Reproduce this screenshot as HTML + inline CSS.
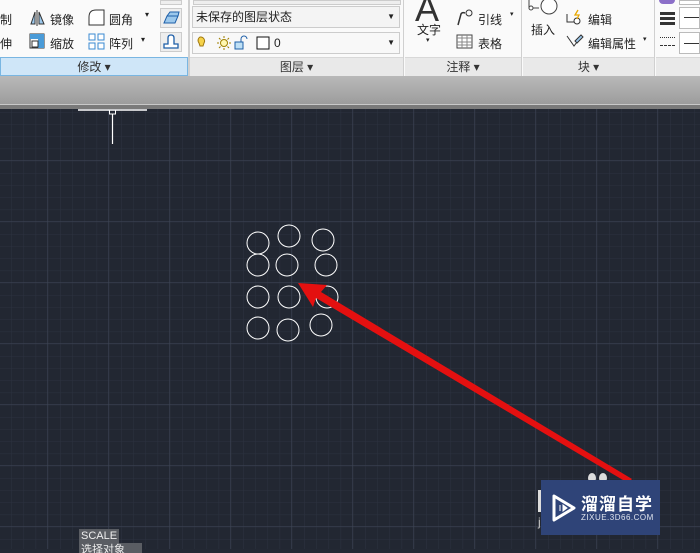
<!DOCTYPE html>
<html><head><meta charset="utf-8"><style>
*{margin:0;padding:0;box-sizing:border-box}
body{width:700px;height:549px;overflow:hidden;position:relative;background:#232833;font-family:"Liberation Sans","Noto Sans CJK SC",sans-serif;font-size:12px;color:#222}
.rib{position:absolute;left:0;top:0;width:700px;height:76px;background:#fafafa}
.lbl{position:absolute;top:57px;height:19px;background:#e9e9e9;border-top:1px solid #d8d8d8;text-align:center;font-size:12px;line-height:18px;color:#333}
.sep{position:absolute;top:0;width:2px;height:76px;background:#d0d0d0}
.t{position:absolute;font-size:12px;color:#222;white-space:nowrap}
.dd{position:absolute;height:22px;background:#f4f4f4;border:1px solid #ccc;font-size:12px;line-height:20px;padding-left:3px}
.band{position:absolute;left:0;top:76px;width:700px;height:28px;background:linear-gradient(#b9b9b9,#9c9c9c)}
.band2{position:absolute;left:0;top:104px;width:700px;height:5px;background:#7a7a7a;border-top:1px solid #c8c8c8}
</style></head><body>
<svg style="position:absolute;left:0;top:109px" width="700" height="440">
<defs>
<pattern id="mn" width="12.2" height="12.2" patternUnits="userSpaceOnUse" x="-1" y="3"><path d="M0 0V12.2M0 0H12.2" stroke="#2c3240" stroke-width="1"/></pattern>
<pattern id="mj" width="61" height="61" patternUnits="userSpaceOnUse" x="47" y="51"><path d="M0 0V61M0 0H61" stroke="#3f4656" stroke-width="1"/></pattern>
</defs>
<rect width="700" height="440" fill="#222732"/>
<rect width="700" height="440" fill="url(#mn)"/>
<rect width="700" height="440" fill="url(#mj)"/>
<line x1="78" y1="1" x2="147" y2="1" stroke="#fff" stroke-width="1.5"/>
<rect x="109.5" y="1" width="6" height="4" fill="none" stroke="#fff"/>
<line x1="112.5" y1="5" x2="112.5" y2="35" stroke="#fff" stroke-width="1.2"/>
<g fill="none" stroke="#fff" stroke-width="1">
<circle cx="258" cy="134" r="11"/><circle cx="289" cy="127" r="11"/><circle cx="323" cy="131" r="11"/>
<circle cx="258" cy="156" r="11"/><circle cx="287" cy="156" r="11"/><circle cx="326" cy="156" r="11"/>
<circle cx="258" cy="188" r="11"/><circle cx="289" cy="188" r="11"/><circle cx="327" cy="188" r="11"/>
<circle cx="258" cy="219" r="11"/><circle cx="288" cy="221" r="11"/><circle cx="321" cy="216" r="11"/>
</g>
<polygon points="298,174 327,176 321,183 632,370 628,374 316,189 313,198" fill="#e41010"/>
<ellipse cx="592" cy="369" rx="4" ry="5" fill="#ddd"/><ellipse cx="603" cy="369" rx="4" ry="5" fill="#ddd"/>
</svg>
<div style="position:absolute;left:541px;top:480px;width:119px;height:55px;background:#2f4478"></div>
<svg style="position:absolute;left:548px;top:492px" width="30" height="32"><path d="M6 4 L26 16 L6 28 Z" fill="none" stroke="#fff" stroke-width="3" stroke-linejoin="round"/><path d="M12 13v6M15 13l4 3-4 3z" stroke="#fff" fill="#fff" stroke-width="1"/></svg>
<div class="t" style="left:581px;top:490px;color:#fff;font-size:17px;font-weight:bold;letter-spacing:1px">溜溜自学</div>
<div class="t" style="left:581px;top:513px;color:#dfe4ee;font-size:8px;letter-spacing:0.5px">ZIXUE.3D66.COM</div>
<div style="position:absolute;left:538px;top:490px;width:3px;height:22px;background:#ddd"></div>
<div class="t" style="left:538px;top:515px;color:#ccc">j</div>
<div class="t" style="left:79px;top:529px;background:#5a5d63;color:#eee;font-size:11px;padding:0 2px;height:14px;line-height:14px">SCALE</div>
<div class="t" style="left:79px;top:543px;background:#5a5d63;color:#eee;font-size:11px;padding:0 2px;height:10px;line-height:14px;width:63px;overflow:hidden">选择对象</div>

<div class="rib"></div>
<div class="lbl" style="left:0;width:188px;background:#cfe6f8;border:1px solid #79b6e2">修改 ▾</div>
<div class="lbl" style="left:190px;width:213px">图层 ▾</div>
<div class="lbl" style="left:405px;width:116px">注释 ▾</div>
<div class="lbl" style="left:523px;width:131px">块 ▾</div>
<div class="lbl" style="left:656px;width:44px"></div>
<div class="sep" style="left:188px"></div><div class="sep" style="left:403px;width:1px"></div><div class="sep" style="left:521px;width:1px"></div><div class="sep" style="left:654px;width:1px"></div>

<div class="t" style="left:0;top:11px">制</div>
<div class="t" style="left:0;top:35px">伸</div>
<svg style="position:absolute;left:30px;top:9px" width="16" height="18"><path d="M7 1v16M5 3L1 15h4zM9 3l5 12H9z" stroke="#333" fill="#9cc8ec" stroke-width="1"/></svg>
<div class="t" style="left:50px;top:11px">镜像</div>
<svg style="position:absolute;left:29px;top:33px" width="17" height="16"><rect x="1" y="1" width="14" height="14" fill="none" stroke="#333"/><rect x="1" y="1" width="14" height="5" fill="#4a9bd8"/><rect x="9" y="6" width="6" height="9" fill="#4a9bd8"/><rect x="3" y="8" width="6" height="6" fill="#fff" stroke="#333"/></svg>
<div class="t" style="left:50px;top:35px">缩放</div>
<svg style="position:absolute;left:88px;top:9px" width="17" height="17"><path d="M1 16V8Q1 1 8 1H16V16Z" fill="#fff" stroke="#333"/></svg>
<div class="t" style="left:109px;top:11px">圆角</div><div class="t" style="left:145px;top:10px;font-size:8px">▾</div>
<svg style="position:absolute;left:88px;top:33px" width="17" height="17"><g fill="#fff" stroke="#3a8ad2"><rect x="1" y="1" width="6" height="6"/><rect x="10" y="1" width="6" height="6"/><rect x="1" y="10" width="6" height="6"/><rect x="10" y="10" width="6" height="6"/></g></svg>
<div class="t" style="left:109px;top:35px">阵列</div><div class="t" style="left:141px;top:35px;font-size:8px">▾</div>
<div style="position:absolute;left:160px;top:0;width:22px;height:5px;border:1px solid #ccc;background:#eee"></div>
<div style="position:absolute;left:160px;top:8px;width:22px;height:20px;border:1px solid #ccc;background:#eee"></div>
<div style="position:absolute;left:160px;top:32px;width:22px;height:20px;border:1px solid #ccc;background:#eee"></div>
<svg style="position:absolute;left:162px;top:11px" width="18" height="14"><path d="M2 12L5 5H16L13 12ZM5 5L8 1H17L16 5" fill="#9cc8ec" stroke="#1e5fa8"/></svg>
<svg style="position:absolute;left:163px;top:34px" width="16" height="16"><path d="M1 14H15V10H11V4Q11 1 8 1Q5 1 5 4V10H1Z" fill="#fff" stroke="#1e5fa8" stroke-width="1.3"/></svg>

<div style="position:absolute;left:193px;top:0;width:208px;height:5px;border:1px solid #ccc;background:#eee"></div>
<div class="dd" style="left:192px;top:6px;width:208px">未保存的图层状态<span style="position:absolute;right:4px;top:0;font-size:8px">▼</span></div>
<div class="dd" style="left:192px;top:32px;width:208px;background:#f8f8f8"><span style="position:absolute;right:4px;top:0;font-size:8px">▼</span>
<svg style="position:absolute;left:2px;top:2px" width="80" height="16"><path d="M5 2a4 4 0 0 1 4 6l-1 3H5L4 8a4 4 0 0 1 1-6z" fill="#f5d24a" stroke="#a07810"/><circle cx="29" cy="8" r="3.5" fill="#fff7b0" stroke="#a08000"/><path d="M29 1v2M29 13v2M22 8h2M34 8h2M24 3l1.5 1.5M32.5 11.5L34 13M24 13l1.5-1.5M32.5 4.5L34 3" stroke="#a08000"/><rect x="40" y="7" width="8" height="7" fill="#bfe0f5" stroke="#1e5fa8"/><path d="M46 7V4a3 3 0 0 1 6 0" fill="none" stroke="#1e5fa8"/><rect x="62" y="2" width="12" height="12" fill="#fff" stroke="#111"/></svg>
<span style="position:absolute;left:81px;top:0">0</span></div>

<div class="t" style="left:415px;top:-12px;font-size:36px;color:#333">A</div>
<div class="t" style="left:417px;top:21px">文字</div><div class="t" style="left:426px;top:36px;font-size:7px">▾</div>
<svg style="position:absolute;left:456px;top:9px" width="18" height="17"><path d="M2 16L5 5Q6 3 9 4" fill="none" stroke="#333" stroke-width="1.5"/><circle cx="13" cy="4" r="3" fill="none" stroke="#333"/></svg>
<div class="t" style="left:478px;top:11px">引线</div><div class="t" style="left:510px;top:10px;font-size:7px">▾</div>
<svg style="position:absolute;left:456px;top:34px" width="17" height="15"><rect x="1" y="1" width="15" height="13" fill="#fff" stroke="#444"/><path d="M1 4H16M1 8H16M1 11H16M6 1V14M11 1V14" stroke="#888"/></svg>
<div class="t" style="left:478px;top:35px">表格</div>

<svg style="position:absolute;left:527px;top:0" width="32" height="16"><path d="M2 0V8H12" fill="none" stroke="#444"/><circle cx="22" cy="6" r="8" fill="#fff" stroke="#444"/><circle cx="4" cy="8" r="2" fill="#fff" stroke="#444"/></svg>
<div class="t" style="left:531px;top:21px">插入</div>
<svg style="position:absolute;left:566px;top:9px" width="18" height="16"><path d="M1 5V13H8" fill="none" stroke="#333"/><circle cx="11" cy="12" r="3" fill="#fff" stroke="#333"/><path d="M12 1L9 6H13L11 10" fill="none" stroke="#e8a800" stroke-width="1.3"/></svg>
<div class="t" style="left:588px;top:11px">编辑</div>
<svg style="position:absolute;left:566px;top:34px" width="18" height="14"><path d="M1 2L8 12L14 4" fill="none" stroke="#333"/><path d="M9 7L15 1L17 3L11 9Z" fill="#9cc8ec" stroke="#333"/></svg>
<div class="t" style="left:588px;top:35px">编辑属性</div><div class="t" style="left:643px;top:35px;font-size:7px">▾</div>

<div style="position:absolute;left:659px;top:0;width:16px;height:4px;background:#8b6fc8;border-radius:0 0 8px 8px"></div>
<div style="position:absolute;left:679px;top:0;width:21px;height:5px;border:1px solid #bbb;background:#fff"></div>
<div style="position:absolute;left:660px;top:12px;width:15px;height:3px;background:#333"></div>
<div style="position:absolute;left:660px;top:17px;width:15px;height:3px;background:#333"></div>
<div style="position:absolute;left:660px;top:22px;width:15px;height:3px;background:#333"></div>
<div style="position:absolute;left:679px;top:7px;width:21px;height:22px;border:1px solid #bbb;background:#fff"><div style="margin:9px 0 0 4px;height:1px;background:#333"></div></div>
<div style="position:absolute;left:660px;top:37px;width:15px;height:9px;border-top:1px dotted #333;border-bottom:1px dashed #333"></div>
<div style="position:absolute;left:679px;top:32px;width:21px;height:22px;border:1px solid #bbb;background:#fff"><div style="margin:10px 0 0 4px;height:1px;background:#333"></div></div>

<div class="band"></div>
<div class="band2"></div>
</body></html>
